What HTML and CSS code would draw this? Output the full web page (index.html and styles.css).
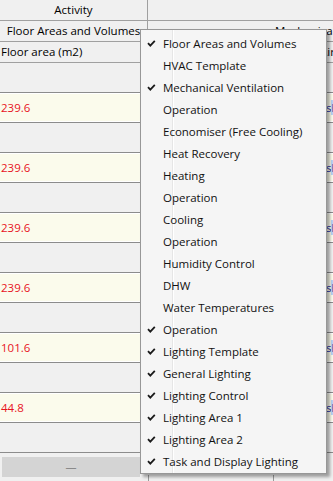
FILE: index.html
```html
<!DOCTYPE html>
<html>
<head>
    <title>Activity grid</title>
    <link rel="stylesheet" href="styles.css">
</head>
<body>
    <div class="grid">
        <div class="row head">
            <div class="cell first center">Activity</div>
            <div class="cell rest"></div>
        </div>
        <div class="row head">
            <div class="cell first center">Floor Areas and Volumes</div>
            <div class="cell rest group">Mechanical</div>
        </div>
        <div class="row head">
            <div class="cell first">Floor area (m2)</div>
            <div class="cell rest sub">Air</div>
        </div>

        <div class="row data"></div>
        <div class="row data value"><div class="num">239.6</div><div class="link">s<span class="hl">h</span></div></div>
        <div class="row data"></div>
        <div class="row data value"><div class="num">239.6</div><div class="link">s<span class="hl">h</span></div></div>
        <div class="row data"></div>
        <div class="row data value"><div class="num">239.6</div><div class="link">s<span class="hl">h</span></div></div>
        <div class="row data"></div>
        <div class="row data value"><div class="num">239.6</div><div class="link">s<span class="hl">h</span></div></div>
        <div class="row data"></div>
        <div class="row data value"><div class="num">101.6</div><div class="link">s<span class="hl">h</span></div></div>
        <div class="row data"></div>
        <div class="row data value"><div class="num">44.8</div><div class="link">s<span class="hl">h</span></div></div>
        <div class="row data"></div>

        <div class="footer">
            <div class="more">&mdash;</div>
            <div class="foot-cell"></div>
        </div>
    </div>

    <!-- контекстное меню колонок -->
    <div class="menu">
        <div class="item on"><span class="mark"><svg width="9" height="7" viewBox="0 0 9 7"><path d="M1 3.2 L3.3 5.6 L7.8 0.9"/></svg></span>Floor Areas and Volumes</div>
        <div class="item"><span class="mark"></span>HVAC Template</div>
        <div class="item on"><span class="mark"><svg width="9" height="7" viewBox="0 0 9 7"><path d="M1 3.2 L3.3 5.6 L7.8 0.9"/></svg></span>Mechanical Ventilation</div>
        <div class="item"><span class="mark"></span>Operation</div>
        <div class="item"><span class="mark"></span>Economiser (Free Cooling)</div>
        <div class="item"><span class="mark"></span>Heat Recovery</div>
        <div class="item"><span class="mark"></span>Heating</div>
        <div class="item"><span class="mark"></span>Operation</div>
        <div class="item"><span class="mark"></span>Cooling</div>
        <div class="item"><span class="mark"></span>Operation</div>
        <div class="item"><span class="mark"></span>Humidity Control</div>
        <div class="item"><span class="mark"></span>DHW</div>
        <div class="item"><span class="mark"></span>Water Temperatures</div>
        <div class="item on"><span class="mark"><svg width="9" height="7" viewBox="0 0 9 7"><path d="M1 3.2 L3.3 5.6 L7.8 0.9"/></svg></span>Operation</div>
        <div class="item on"><span class="mark"><svg width="9" height="7" viewBox="0 0 9 7"><path d="M1 3.2 L3.3 5.6 L7.8 0.9"/></svg></span>Lighting Template</div>
        <div class="item on"><span class="mark"><svg width="9" height="7" viewBox="0 0 9 7"><path d="M1 3.2 L3.3 5.6 L7.8 0.9"/></svg></span>General Lighting</div>
        <div class="item on"><span class="mark"><svg width="9" height="7" viewBox="0 0 9 7"><path d="M1 3.2 L3.3 5.6 L7.8 0.9"/></svg></span>Lighting Control</div>
        <div class="item on"><span class="mark"><svg width="9" height="7" viewBox="0 0 9 7"><path d="M1 3.2 L3.3 5.6 L7.8 0.9"/></svg></span>Lighting Area 1</div>
        <div class="item on"><span class="mark"><svg width="9" height="7" viewBox="0 0 9 7"><path d="M1 3.2 L3.3 5.6 L7.8 0.9"/></svg></span>Lighting Area 2</div>
        <div class="item on"><span class="mark"><svg width="9" height="7" viewBox="0 0 9 7"><path d="M1 3.2 L3.3 5.6 L7.8 0.9"/></svg></span>Task and Display Lighting</div>
    </div>
</body>
</html>
```

FILE: styles.css
```css
body {
    margin: 0;
    padding: 0;
    width: 333px;
    height: 481px;
    background: #f0f0f0;
    overflow: hidden;
    font-family: "Open Sans", "Liberation Sans", sans-serif;
    font-size: 11.5px;
    color: #000;
    position: relative;
}

.grid {
    width: 333px;
}

.row {
    display: flex;
}

.head {
    height: 20px;
    line-height: 20px;
    border-bottom: 1px solid #a0a0a0;
}

.cell {
    white-space: nowrap;
    overflow: hidden;
}

.first {
    width: 148px;
    padding-left: 1px;
    box-sizing: border-box;
    border-right: 1px solid #a0a0a0;
    flex: none;
}

.center {
    text-align: center;
    padding-left: 0;
}

.rest {
    flex: 1;
}

.group {
    padding-left: 127px;
}

.sub {
    padding-left: 172px;
}

/* строки данных */
.data {
    height: 29px;
    border-bottom: 1px solid #8c8c8c;
}

.value {
    background: #fff;
    padding: 1px 0 1px;
    box-sizing: border-box;
    height: 30px;
}

.num {
    width: 148px;
    flex: none;
    background: #fbfbec;
    color: #e8141e;
    line-height: 27px;
    padding-left: 1px;
    box-sizing: border-box;
}

.link {
    flex: 1;
    background: #fbfbec;
    color: #1c2ea8;
    line-height: 27px;
    padding-left: 178px;
    white-space: nowrap;
    overflow: hidden;
}

.hl {
    background: #b9d3f5;
}

.footer {
    display: flex;
    height: 29px;
    padding-top: 4px;
    box-sizing: border-box;
}

.more {
    width: 138px;
    margin-left: 2px;
    height: 20px;
    background: #d4d4d4;
    color: #8a8a8a;
    text-align: center;
    line-height: 20px;
    font-size: 11px;
}

.foot-cell {
    width: 124px;
    margin-left: 8px;
    margin-top: 18px;
    border-left: 1px solid #9a9a9a;
    border-right: 1px solid #9a9a9a;
}

/* меню */
.menu {
    position: absolute;
    left: 140px;
    top: 29px;
    width: 185px;
    padding-top: 2px;
    padding-bottom: 1px;
    background-color: #f5f5f5;
    background-image: linear-gradient(to right, transparent 31px, #e6e6e6 31px, #e6e6e6 32px, #fff 32px, #fff 33px, transparent 33px);
    border: 1px solid #979797;
    box-shadow: 3px 3px 3px rgba(0, 0, 0, 0.35);
}

.item {
    display: flex;
    align-items: center;
    height: 22px;
    white-space: nowrap;
    color: #111;
}

.mark {
    width: 22px;
    flex: none;
    display: flex;
    align-items: center;
    padding-left: 6px;
    box-sizing: border-box;
}

.mark path {
    fill: none;
    stroke: #1a1a1a;
    stroke-width: 1.8;
}
```
